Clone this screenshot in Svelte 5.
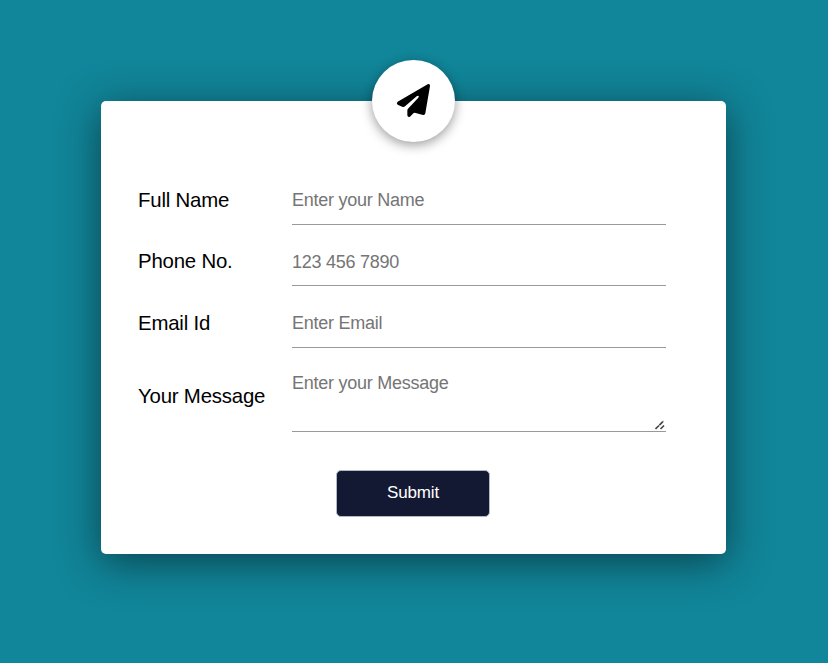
<script>
  const fields = [
    { id: 'name', label: 'Full Name', type: 'text', placeholder: 'Enter your Name' },
    { id: 'phone', label: 'Phone No.', type: 'tel', placeholder: '123 456 7890' },
    { id: 'email', label: 'Email Id', type: 'email', placeholder: 'Enter Email' }
  ];
</script>

<main>
  <form class="card" onsubmit={(e) => e.preventDefault()}>
    <div class="badge">
      <svg viewBox="0 0 150 150" width="50" height="50" aria-hidden="true">
        <path d="M119 28L29 80Q24 85 29 89L44 96Q48 97 52 93L86 64Q90 61 92 63Q93 65 91 68L60 101Q58 103 58 107V121Q59 127 64 126Q66 126 68 123L77 114Q79 112 83 114L105 120Q111 121 112 115L126 33Q126 25 119 28Z" />
      </svg>
    </div>
    {#each fields as f}
      <div class="row {f.id}">
        <label for={f.id}>{f.label}</label>
        <input id={f.id} type={f.type} placeholder={f.placeholder} />
      </div>
    {/each}
    <div class="row message">
      <label for="message">Your Message</label>
      <textarea id="message" placeholder="Enter your Message"></textarea>
      <svg class="grip" viewBox="0 0 10 10" width="10" height="10" aria-hidden="true">
        <path d="M.5 9L8.5 1M5.5 9L9 5.5" fill="none" stroke="#444" stroke-width="1.6" stroke-dasharray="5 .5" />
      </svg>
    </div>
    <button type="submit">Submit</button>
  </form>
</main>

<style>
  :global(body) {
    background: #118599;
    overflow: hidden;
  }
  main {
    box-sizing: border-box;
    height: 663px;
    padding: 101px 102px 0 101px;
    font-family: 'Liberation Sans', Arial, sans-serif;
  }
  .card {
    position: relative;
    box-sizing: border-box;
    width: 625px;
    height: 453px;
    padding: 74px 60px 0 37px;
    display: flex;
    flex-direction: column;
    background: #fff;
    border-radius: 5px;
    box-shadow: 0 8px 40px rgba(0, 0, 0, 0.5);
  }
  .badge {
    position: absolute;
    top: -41px;
    left: 271px;
    width: 83px;
    height: 82px;
    border-radius: 50%;
    background: #fff;
    box-shadow: 0 3px 12px rgba(0, 0, 0, 0.4);
    display: flex;
    align-items: center;
    justify-content: center;
  }
  .badge svg {
    margin: 0 1px 2px 0;
  }
  .row {
    position: relative;
    display: flex;
    align-items: center;
    height: 50px;
    margin-bottom: 11px;
  }
  .phone {
    margin-bottom: 12px;
  }
  label {
    width: 154px;
    font-size: 20.4px;
    letter-spacing: -0.2px;
    line-height: 24px;
    color: #000;
  }
  input,
  textarea {
    box-sizing: border-box;
    flex: 1;
    min-width: 0;
    height: 50px;
    margin: 0;
    padding: 1px 0 0;
    border: 0;
    border-bottom: 1px solid #999;
    border-radius: 0;
    outline: 0;
    background: transparent;
    font: 18px 'Liberation Sans', Arial, sans-serif;
    letter-spacing: -0.25px;
  }
  .phone input {
    padding-top: 3px;
  }
  ::placeholder {
    color: #757575;
    opacity: 1;
  }
  .message {
    height: 73px;
    margin-bottom: 0;
  }
  textarea {
    padding-top: 14px;
    height: 73px;
    resize: none;
  }
  .grip {
    position: absolute;
    right: 1px;
    bottom: 2px;
  }
  button {
    align-self: center;
    width: 154px;
    height: 47px;
    margin: 38px 0 0 22px;
    padding: 0 0 2px;
    border: 1px solid #b4b7c4;
    border-radius: 5px;
    background: #141933;
    color: #fff;
    font: 17px 'Liberation Sans', Arial, sans-serif;
    letter-spacing: -0.15px;
  }
</style>
